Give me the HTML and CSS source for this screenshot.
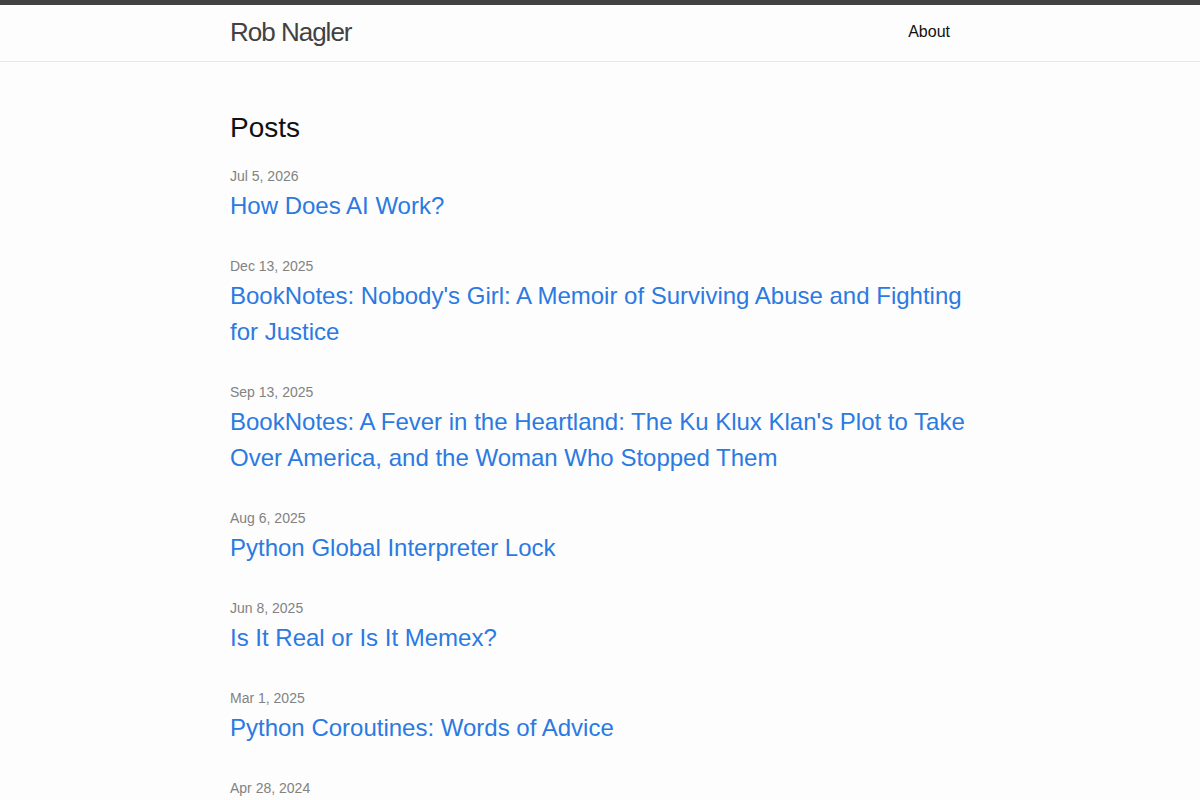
FILE: index.html
```html
<!DOCTYPE html>
<html lang="en">
<head>
    <meta charset="UTF-8">
    <meta name="viewport" content="width=device-width, initial-scale=1.0">
    <title>Rob Nagler</title>
    <link rel="stylesheet" href="styles.css">
</head>
<body>
    <header class="site-header">
        <div class="wrapper header-row">
            <a class="site-title" href="#">Rob Nagler</a>
            <nav class="site-nav">
                <a class="page-link" href="#">About</a>
            </nav>
        </div>
    </header>

    <main class="page-content">
        <div class="wrapper">
            <h2 class="post-list-heading">Posts</h2>
            <ul class="post-list">
                <li>
                    <span class="post-meta">Jul 5, 2026</span>
                    <h3><a class="post-link" href="#">How Does AI Work?</a></h3>
                </li>
                <li>
                    <span class="post-meta">Dec 13, 2025</span>
                    <h3><a class="post-link" href="#">BookNotes: Nobody's Girl: A Memoir of Surviving Abuse and Fighting for Justice</a></h3>
                </li>
                <li>
                    <span class="post-meta">Sep 13, 2025</span>
                    <h3><a class="post-link" href="#">BookNotes: A Fever in the Heartland: The Ku Klux Klan's Plot to Take Over America, and the Woman Who Stopped Them</a></h3>
                </li>
                <li>
                    <span class="post-meta">Aug 6, 2025</span>
                    <h3><a class="post-link" href="#">Python Global Interpreter Lock</a></h3>
                </li>
                <li>
                    <span class="post-meta">Jun 8, 2025</span>
                    <h3><a class="post-link" href="#">Is It Real or Is It Memex?</a></h3>
                </li>
                <li>
                    <span class="post-meta">Mar 1, 2025</span>
                    <h3><a class="post-link" href="#">Python Coroutines: Words of Advice</a></h3>
                </li>
                <li>
                    <span class="post-meta">Apr 28, 2024</span>
                    <h3><a class="post-link" href="#">BookNotes</a></h3>
                </li>
            </ul>
        </div>
    </main>
</body>
</html>
```

FILE: styles.css
```css
body {
    margin: 0;
    font-family: "Liberation Sans", Arial, sans-serif;
    font-size: 16px;
    line-height: 1.5;
    color: #111;
    background-color: #fdfdfd;
}
h2, h3, ul {
    margin: 0;
    padding: 0;
}
a {
    text-decoration: none;
}
.wrapper {
    max-width: 740px;
    margin: 0 auto;
    padding: 0 30px;
}
.site-header {
    border-top: 5px solid #424242;
    border-bottom: 1px solid #e8e8e8;
    min-height: 56px;
}
.header-row {
    display: flex;
    justify-content: space-between;
    align-items: flex-start;
}
.site-title {
    font-size: 26px;
    font-weight: 300;
    line-height: 54px;
    letter-spacing: -1px;
    color: #424242;
}
.site-nav {
    line-height: 54px;
}
.page-link {
    color: #111;
    margin-right: 20px;
}
.page-content {
    padding: 45px 0 30px;
}
.post-list-heading {
    font-size: 28px;
    font-weight: 400;
    line-height: 42px;
    margin-bottom: 15px;
}
.post-list {
    list-style: none;
}
.post-list li {
    margin-bottom: 30px;
}
.post-meta {
    font-size: 14px;
    color: #828282;
}
.post-list h3 {
    font-weight: 400;
}
.post-link {
    display: block;
    font-size: 24px;
    line-height: 36px;
    color: #2a7ae2;
}
```
